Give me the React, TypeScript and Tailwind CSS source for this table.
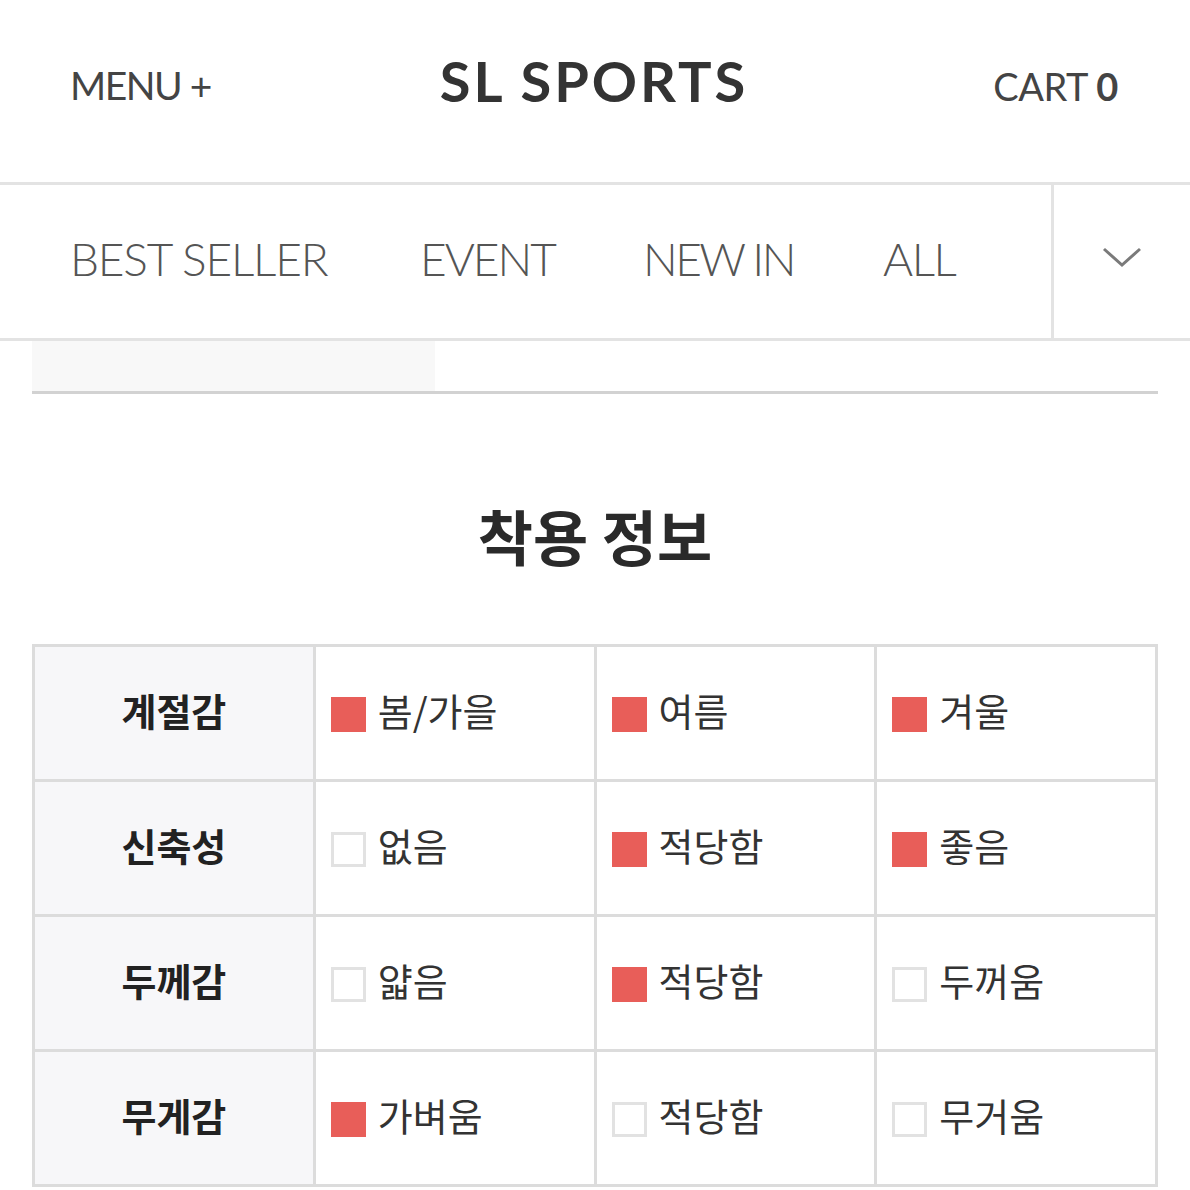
import React from "react";

type Cell = { label: string; on: boolean };
const rows: { title: string; cells: Cell[] }[] = [
  { title: "계절감", cells: [{ label: "봄/가을", on: true }, { label: "여름", on: true }, { label: "겨울", on: true }] },
  { title: "신축성", cells: [{ label: "없음", on: false }, { label: "적당함", on: true }, { label: "좋음", on: true }] },
  { title: "두께감", cells: [{ label: "얇음", on: false }, { label: "적당함", on: true }, { label: "두꺼움", on: false }] },
  { title: "무게감", cells: [{ label: "가벼움", on: true }, { label: "적당함", on: false }, { label: "무거움", on: false }] },
];

const latin = { fontFamily: "Lato, 'Open Sans', sans-serif" };
const kr = { fontFamily: "'Noto Sans CJK KR', 'Noto Sans', sans-serif" };

export default function App() {
  return (
    <div className="w-[1190px] h-[1190px] bg-white overflow-hidden">
      {/* header */}
      <div className="h-[185px] flex items-center justify-between pl-[70px] pr-[72px] border-b-[3px] border-[#e3e3e3]" style={latin}>
        <div className="w-[260px] text-[39px] leading-none tracking-[-1.5px] text-[#444] font-normal pb-[11px]">MENU +</div>
        <div className="text-[56px] leading-none font-bold tracking-[3px] text-[#333] pb-[20px]">SL SPORTS</div>
        <div className="w-[260px] text-right text-[38px] leading-none tracking-[-0.4px] text-[#444] pb-[11px]">
          CART <span className="font-bold">0</span>
        </div>
      </div>
      {/* nav */}
      <div className="h-[156px] flex border-b-[3px] border-[#e3e3e3]" style={latin}>
        <div className="flex-1 flex items-center pl-[70px] pb-[6px] text-[46px] font-light text-[#555] leading-none">
          <div className="w-[350px] tracking-[-1.2px]">BEST SELLER</div>
          <div className="w-[223px] tracking-[-2px]">EVENT</div>
          <div className="w-[240px] tracking-[-2.6px]">NEW IN</div>
          <div className="tracking-[-1.5px]">ALL</div>
        </div>
        <div className="w-[139px] border-l-[3px] border-[#e3e3e3] flex items-center justify-center pb-[10px]">
          <svg width="42" height="24" viewBox="0 0 42 24" fill="none">
            <path d="M3 4 L21 20 L39 4" stroke="#7a7a7a" strokeWidth="3" />
          </svg>
        </div>
      </div>
      {/* tab strip */}
      <div className="mx-[32px] h-[53px] border-b-[3px] border-[#d2d2d2] flex">
        <div className="w-[403px] bg-[#f8f8f8]" />
      </div>
      {/* title */}
      <div className="pt-[101px] pb-[69px] text-center text-[60px] font-bold text-[#2a2a2a] leading-[80px]" style={kr}>
        착용 정보
      </div>
      {/* table */}
      <div className="mx-[32px] grid grid-cols-4 gap-[3px] p-[3px] bg-[#dcdcdc]" style={kr}>
        {rows.map((r) => (
          <React.Fragment key={r.title}>
            <div className="h-[132px] bg-[#f7f7f9] flex items-center justify-center pb-[6px] text-[38px] font-bold text-[#222] leading-none">
              {r.title}
            </div>
            {r.cells.map((c, i) => (
              <div key={i} className="h-[132px] bg-white flex items-center pl-[15px] gap-[12px]">
                {c.on ? (
                  <div className="w-[35px] h-[35px] bg-[#e85e59] mt-[2px]" />
                ) : (
                  <div className="w-[35px] h-[35px] border-[3px] border-[#e2e2e2] bg-white mt-[2px]" />
                )}
                <span className="text-[38px] text-[#333] leading-none pb-[6px]">{c.label}</span>
              </div>
            ))}
          </React.Fragment>
        ))}
      </div>
    </div>
  );
}
